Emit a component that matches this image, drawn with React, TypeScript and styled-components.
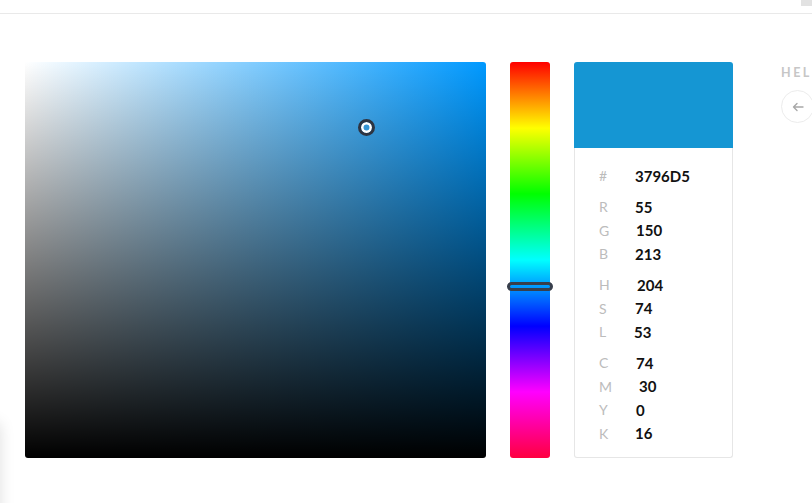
import styled, { createGlobalStyle } from "styled-components";

const GlobalStyle = createGlobalStyle`
  html, body {
    margin: 0;
    padding: 0;
    background: #fff;
    overflow: hidden;
    font-family: Lato, "Open Sans", sans-serif;
  }
`;

const TopBar = styled.header`
  height: 13px;
  border-bottom: 1px solid #e9e9e9;
  display: flex;
  justify-content: flex-end;
`;

const ScrollNub = styled.div`
  width: 11px;
  height: 6px;
  background: #e2e2e2;
`;

const Workspace = styled.main`
  display: flex;
  align-items: flex-start;
  padding: 48px 0 0 25px;
  width: 900px;
`;

const SatBox = styled.div<{ $hue: number }>`
  position: relative;
  width: 461px;
  height: 396px;
  border-radius: 3px;
  background: linear-gradient(to top, #000, rgba(0, 0, 0, 0)),
    linear-gradient(to right, #fff, hsl(${(p) => p.$hue}, 100%, 50%));
`;

const SatCursor = styled.div`
  position: absolute;
  width: 11px;
  height: 11px;
  margin: -8px 0 0 -8px;
  border: 3px solid #2e3441;
  border-radius: 50%;
  background: #3796d5;
  box-shadow: inset 0 0 0 2.5px #fff;
`;

const HueBar = styled.div`
  position: relative;
  width: 40px;
  height: 396px;
  margin-left: 24px;
  border-radius: 3px;
  background: linear-gradient(
    to bottom,
    #ff0000 0%,
    #ffff00 16.7%,
    #00ff00 33.3%,
    #00ffff 50%,
    #0000ff 66.7%,
    #ff00ff 83.3%,
    #ff0040 100%
  );
`;

const HueHandle = styled.div`
  position: absolute;
  left: -3px;
  right: -3px;
  height: 3px;
  margin-top: -4px;
  border: 3px solid #383f4c;
  border-radius: 5px;
`;

const Card = styled.section`
  width: 159px;
  height: 396px;
  margin-left: 24px;
  display: flex;
  flex-direction: column;
`;

const Swatch = styled.div<{ $color: string }>`
  height: 86px;
  background: ${(p) => p.$color};
  border-radius: 3px 3px 0 0;
`;

const Values = styled.div`
  flex: 1;
  border: 1px solid #e6e6e6;
  border-top: none;
  border-radius: 0 0 3px 3px;
  padding: 16px 0 0 24px;
`;

const Group = styled.div`
  & + & {
    margin-top: 7.5px;
  }
`;

const Row = styled.div`
  display: flex;
  align-items: center;
  height: 23.5px;
`;

const Label = styled.span`
  width: 36px;
  font-size: 14px;
  color: #bcbcbc;
`;

const Value = styled.span<{ $nudge?: number }>`
  font-size: 15px;
  font-weight: 700;
  color: #111;
  margin-left: ${(p) => p.$nudge ?? 0}px;
`;

const Help = styled.aside`
  margin-left: 48px;
  padding-top: 3px;
  display: flex;
  flex-direction: column;
  gap: 10px;
`;

const HelpTitle = styled.div`
  font-size: 12.5px;
  font-weight: 700;
  letter-spacing: 2.5px;
  color: #c6c6c6;
`;

const RoundButton = styled.button`
  width: 33px;
  height: 33px;
  border-radius: 50%;
  border: 1px solid #ececec;
  background: #fff;
  display: flex;
  align-items: center;
  justify-content: center;
  padding: 0;
  color: #a8a8a8;
`;

const SidePanelEdge = styled.div`
  position: fixed;
  left: -200px;
  bottom: -30px;
  width: 200px;
  height: 110px;
  background: #fff;
  box-shadow: 0 0 14px rgba(0, 0, 0, 0.13);
`;

type Entry = [string, string, number?];

const groups: Entry[][] = [
  [["#", "3796D5"]],
  [
    ["R", "55"],
    ["G", "150", 1],
    ["B", "213"],
  ],
  [
    ["H", "204", 2],
    ["S", "74"],
    ["L", "53", -1],
  ],
  [
    ["C", "74", 1],
    ["M", "30", 4],
    ["Y", "0", 1],
    ["K", "16"],
  ],
];

const hue = 204;
const sat = 0.74;
const val = 0.835;

export default function App() {
  return (
    <>
      <GlobalStyle />
      <TopBar>
        <ScrollNub />
      </TopBar>
      <Workspace>
        <SatBox $hue={hue}>
          <SatCursor
            style={{ left: `${sat * 100}%`, top: `${(1 - val) * 100}%` }}
          />
        </SatBox>
        <HueBar>
          <HueHandle style={{ top: `${(hue / 360) * 100}%` }} />
        </HueBar>
        <Card>
          <Swatch $color="#1596d3" />
          <Values>
            {groups.map((g, i) => (
              <Group key={i}>
                {g.map(([label, value, nudge]) => (
                  <Row key={label}>
                    <Label>{label}</Label>
                    <Value $nudge={nudge}>{value}</Value>
                  </Row>
                ))}
              </Group>
            ))}
          </Values>
        </Card>
        <Help>
          <HelpTitle>HELP</HelpTitle>
          <RoundButton>
            <svg width="12" height="10" viewBox="0 0 12 10" fill="none">
              <path
                d="M11 5H1.5M5 1.5L1.5 5L5 8.5"
                stroke="currentColor"
                strokeWidth="1.4"
                strokeLinecap="round"
                strokeLinejoin="round"
              />
            </svg>
          </RoundButton>
        </Help>
      </Workspace>
      <SidePanelEdge />
    </>
  );
}
